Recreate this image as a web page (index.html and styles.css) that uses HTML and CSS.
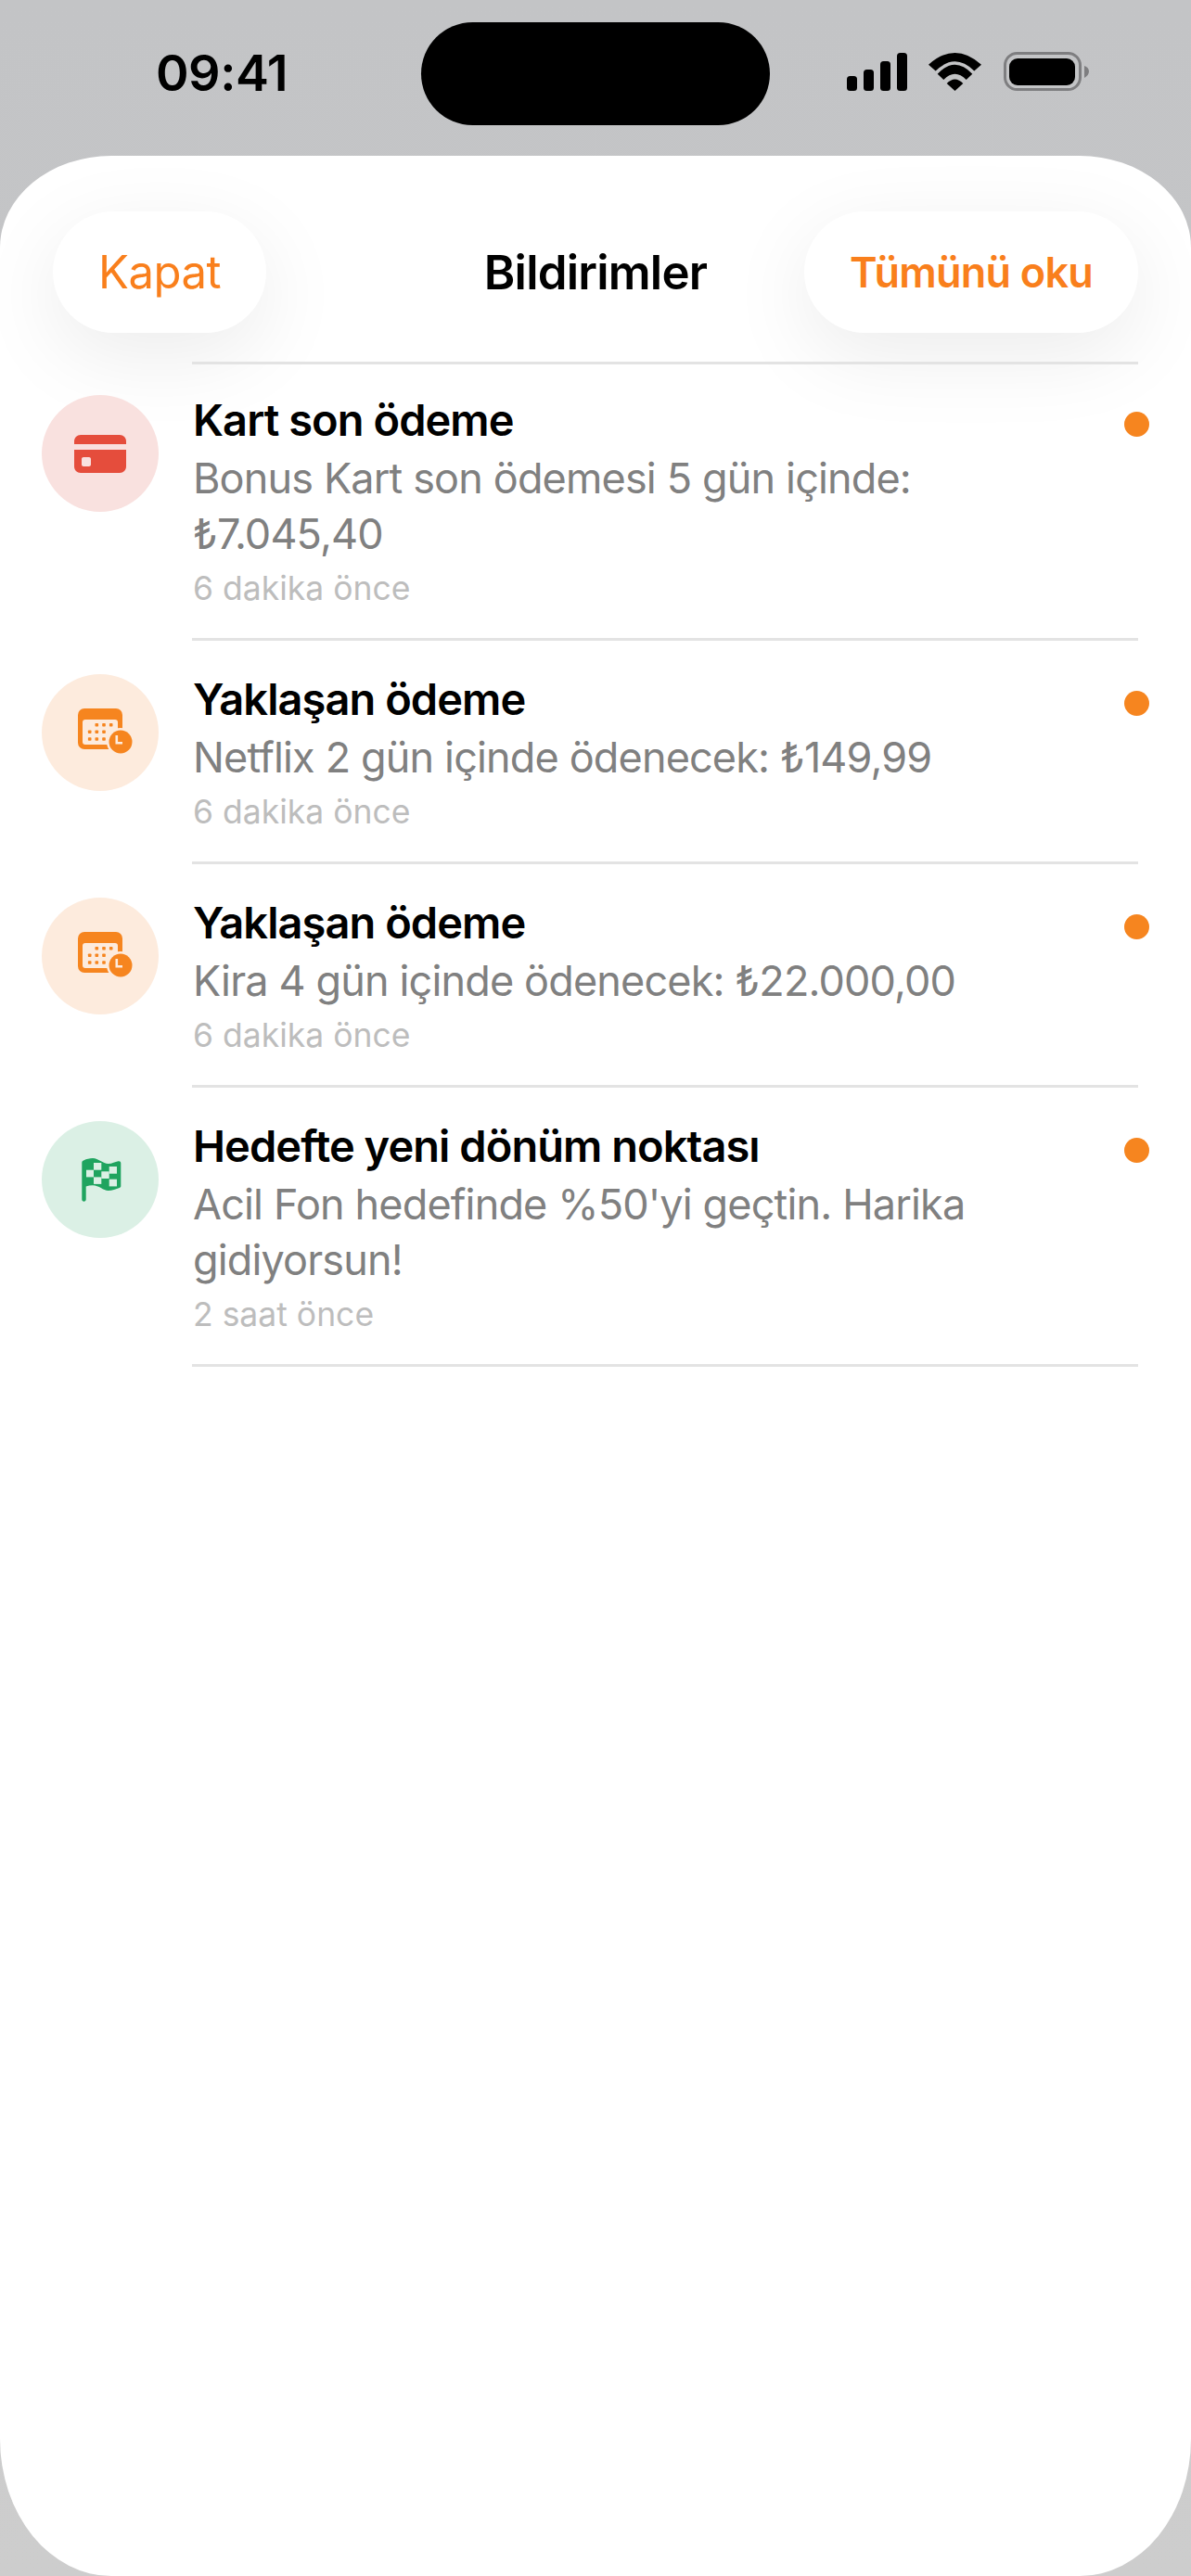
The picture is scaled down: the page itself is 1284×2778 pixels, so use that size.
FILE: index.html
```html
<!DOCTYPE html>
<html lang="tr">
<head>
    <meta charset="UTF-8">
    <meta name="viewport" content="width=device-width, initial-scale=1.0">
    <title>Bildirimler</title>
    <link rel="stylesheet" href="styles.css">
</head>
<body>
    <div class="status-bar">
        <div class="status-time">09:41</div>
        <div class="island"></div>
        <div class="status-icons">
            <svg class="signal" width="65" height="41" viewBox="0 0 65 41">
                <rect x="0" y="25" width="11" height="16" rx="3.5"/>
                <rect x="18" y="18" width="11" height="23" rx="3.5"/>
                <rect x="36" y="9" width="11" height="32" rx="3.5"/>
                <rect x="54" y="0" width="11" height="41" rx="3.5"/>
            </svg>
            <svg class="wifi" width="57" height="41" viewBox="0 0 57 41">
                <path d="M0 12.7Q28.5 -12.7 57 12.7L49.3 19.5Q28.5 -0.9 7.7 19.5Z"/>
                <path d="M9.7 22.7Q28.5 2.7 47.3 22.7L40.7 29Q28.5 16.5 16.3 29Z"/>
                <path d="M19.7 33Q28.5 24 37.3 33L28.5 41Z"/>
            </svg>
            <svg class="battery" width="92" height="42" viewBox="0 0 92 42">
                <rect x="1.5" y="1.5" width="81" height="39" rx="13" fill="none" stroke="#7e7e80" stroke-width="3"/>
                <rect x="6" y="7" width="71" height="29" rx="9"/>
                <path d="M87 15C90 16 92 18 92 21C92 24 90 26 87 28Z" fill="#7e7e80"/>
            </svg>
        </div>
    </div>

    <div class="sheet">
        <div class="header">
            <button class="pill pill-close">Kapat</button>
            <h1 class="header-title">Bildirimler</h1>
            <button class="pill pill-read">Tümünü oku</button>
        </div>
        <div class="header-line"></div>

        <div class="list">
            <div class="row">
                <div class="icon icon-red">
                    <svg width="60" height="60" viewBox="0 0 60 60">
                        <path d="M2 20V17C2 13 5 10 9 10H51C55 10 58 13 58 17V20Z" fill="#e54d3c"/>
                        <path fill-rule="evenodd" d="M2 26H58V44C58 48 55 51 51 51H9C5 51 2 48 2 44ZM12 34C10.900 34 10 34.900 10 36V42C10 43.100 10.900 44 12 44H18C19.100 44 20 43.100 20 42V36C20 34.900 19.100 34 18 34Z" fill="#e54d3c"/>
                    </svg>
                </div>
                <div class="row-main">
                    <div class="row-title">Kart son ödeme</div>
                    <div class="row-text">Bonus Kart son ödemesi 5 gün içinde:<br>₺7.045,40</div>
                    <div class="row-time">6 dakika önce</div>
                </div>
                <span class="dot"></span>
            </div>

            <div class="row">
                <div class="icon icon-orange">
                    <svg width="60" height="60" viewBox="0 0 60 60">
                        <use href="#calendar-clock"/>
                    </svg>
                </div>
                <div class="row-main">
                    <div class="row-title">Yaklaşan ödeme</div>
                    <div class="row-text">Netflix 2 gün içinde ödenecek: ₺149,99</div>
                    <div class="row-time">6 dakika önce</div>
                </div>
                <span class="dot"></span>
            </div>

            <div class="row">
                <div class="icon icon-orange">
                    <svg width="60" height="60" viewBox="0 0 60 60">
                        <use href="#calendar-clock"/>
                    </svg>
                </div>
                <div class="row-main">
                    <div class="row-title">Yaklaşan ödeme</div>
                    <div class="row-text">Kira 4 gün içinde ödenecek: ₺22.000,00</div>
                    <div class="row-time">6 dakika önce</div>
                </div>
                <span class="dot"></span>
            </div>

            <div class="row">
                <div class="icon icon-green">
                    <svg width="60" height="60" viewBox="0 0 60 60">
                        <path d="M10.300 12C10.300 10.500 11 9.700 12.500 9.200C15 8 18.500 7 22 7C28 7 33 13 38.700 13C43 13 46 11 49.500 10.300C51.200 10 52.300 10.800 52.300 12.500V37C52.300 38 51.800 38.600 50.800 38.900C47 40 43 42 38.700 42C33 42 29 36.300 22 36.300C19.500 36.300 17 36.800 14.700 37.500V51.500C14.700 52.800 13.700 53.700 12.500 53.700C11.300 53.700 10.300 52.800 10.300 51.500Z" fill="#1fa45f"/>
                        <g fill="#dbf0e5">
                            <rect x="23" y="12" width="8.300" height="7.700"/>
                            <rect x="39.700" y="16" width="8.300" height="7.700"/>
                            <rect x="15" y="19.700" width="8" height="7.700"/>
                            <rect x="31.300" y="21.300" width="8.400" height="7.700"/>
                            <rect x="23" y="27.400" width="8.300" height="7.500"/>
                            <rect x="39.700" y="29.700" width="8.300" height="7.700"/>
                        </g>
                    </svg>
                </div>
                <div class="row-main">
                    <div class="row-title">Hedefte yeni dönüm noktası</div>
                    <div class="row-text">Acil Fon hedefinde %50'yi geçtin. Harika<br>gidiyorsun!</div>
                    <div class="row-time">2 saat önce</div>
                </div>
                <span class="dot"></span>
            </div>
        </div>
    </div>

    <svg class="defs" width="0" height="0">
        <defs>
            <g id="calendar-clock">
                <rect x="6" y="4" width="48" height="44" rx="7" fill="#f6851f"/>
                <rect x="11" y="16" width="38" height="27" rx="3" fill="#fdebdd"/>
                <g fill="#f6851f">
                    <rect x="24.500" y="20" width="3.600" height="3.600" rx="0.800"/>
                    <rect x="32.200" y="20" width="3.600" height="3.600" rx="0.800"/>
                    <rect x="39.900" y="20" width="3.600" height="3.600" rx="0.800"/>
                    <rect x="16.900" y="27.500" width="3.600" height="3.600" rx="0.800"/>
                    <rect x="24.500" y="27.500" width="3.600" height="3.600" rx="0.800"/>
                    <rect x="32.200" y="27.500" width="3.600" height="3.600" rx="0.800"/>
                    <rect x="16.900" y="35.200" width="3.600" height="3.600" rx="0.800"/>
                    <rect x="24.500" y="35.200" width="3.600" height="3.600" rx="0.800"/>
                    <rect x="32.200" y="35.200" width="3.600" height="3.600" rx="0.800"/>
                </g>
                <circle cx="52" cy="40" r="15" fill="#fdebdd"/>
                <circle cx="52" cy="40" r="12.500" fill="#f6851f"/>
                <path d="M47.800 33V41.200H54" fill="none" stroke="#fdebdd" stroke-width="2.600"/>
            </g>
        </defs>
    </svg>
</body>
</html>
```

FILE: styles.css
```css
body{
    margin: 0;
    height: 2778px;
    overflow: hidden;
    font-family: Inter, "Noto Sans", sans-serif;
    background: linear-gradient(#c3c4c6, #cdcdcd);
}
button{
    font-family: inherit;
    border: none;
    background-color: white;
}

/* status bar */
.status-bar{
    height: 168px;
    display: grid;
    grid-template-columns: 454px 376px 1fr;
}
.status-time{
    padding: 45px 0 0 168px;
    font-size: 54px;
    line-height: 68px;
    font-weight: 600;
    letter-spacing: -0.5px;
    color: black;
}
.island{
    height: 111px;
    margin-top: 24px;
    background-color: black;
    border-radius: 56px;
}
.status-icons{
    display: flex;
    align-items: flex-start;
    gap: 23px;
    padding: 57px 0 0 83px;
}
.status-icons svg{
    display: block;
    flex: none;
}
.battery{
    margin: -1px 0 0 1px;
}

/* sheet */
.sheet{
    height: 2610px;
    background-color: white;
    border-radius: 120px 120px 120px 120px / 99px 99px 148px 148px;
    overflow: hidden;
}
.header{
    display: grid;
    grid-template-columns: 1fr auto 1fr;
    align-items: center;
    height: 131px;
    padding: 60px 57px 0;
}
.pill{
    height: 131px;
    padding: 0 49px;
    border-radius: 66px;
    box-shadow: 0 24px 90px rgba(0, 0, 0, 0.08);
    color: #f97f1c;
    cursor: pointer;
}
.pill-close{
    justify-self: start;
    font-size: 49px;
    font-weight: 400;
    letter-spacing: -0.5px;
}
.pill-read{
    justify-self: end;
    font-size: 45px;
    font-weight: 600;
    letter-spacing: -0.8px;
}
.header-title{
    margin: 0;
    font-size: 51px;
    line-height: 60px;
    font-weight: 600;
    letter-spacing: -0.8px;
    color: black;
}
.header-line{
    height: 3px;
    margin: 31px 57px 0 207px;
    background-color: #e3e3e3;
    position: relative;
}

/* list */
.list{
    margin-top: -3px;
}
.row{
    position: relative;
    display: flex;
    padding: 0 57px 0 45px;
}
.icon{
    flex: none;
    width: 126px;
    height: 126px;
    margin: 36px 36px 0 0;
    border-radius: 50%;
    display: flex;
    align-items: center;
    justify-content: center;
}
.icon svg{
    overflow: visible;
}
.icon-red{
    background-color: #f9e1df;
}
.icon-orange{
    background-color: #fdebdd;
}
.icon-green{
    background-color: #dbf0e5;
}
.row-main{
    flex: 1;
    padding: 36px 0 30px 1px;
    border-bottom: 3px solid #e3e3e3;
}
.row-title{
    font-size: 47px;
    line-height: 54px;
    font-weight: 600;
    letter-spacing: -0.95px;
    color: black;
}
.row-text{
    margin-top: 6px;
    font-size: 45px;
    line-height: 60px;
    letter-spacing: -0.85px;
    color: #808080;
}
.row-time{
    margin-top: 6px;
    font-size: 35.5px;
    line-height: 46px;
    color: #bdbdbd;
}
.dot{
    position: absolute;
    top: 54px;
    right: 45px;
    width: 27px;
    height: 27px;
    border-radius: 50%;
    background-color: #f6851f;
}

.defs{
    position: absolute;
}
```
